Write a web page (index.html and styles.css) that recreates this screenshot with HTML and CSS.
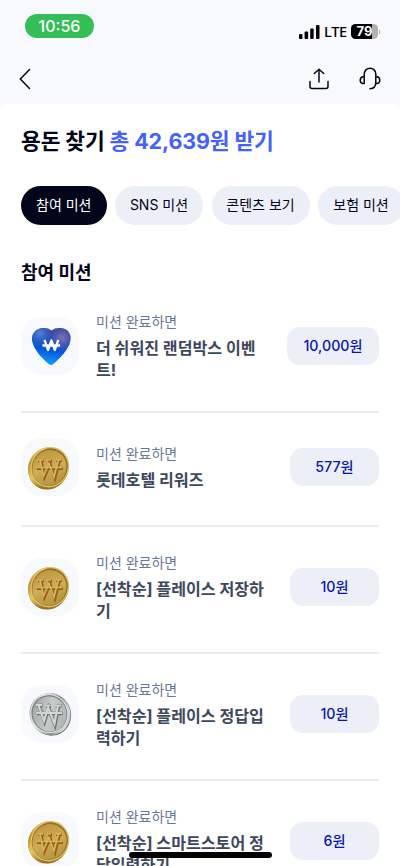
FILE: index.html
```html
<!DOCTYPE html>
<html lang="ko">
<head>
<meta charset="utf-8">
<meta name="viewport" content="width=device-width, initial-scale=1">
<title>용돈 찾기</title>
<link rel="stylesheet" href="styles.css">
</head>
<body>
<svg class="defs" width="0" height="0">
  <defs>
    <linearGradient id="goldRim" x1="0" y1="0" x2="1" y2="1"><stop offset="0" stop-color="#fff09a"/><stop offset=".3" stop-color="#b88d30"/><stop offset=".55" stop-color="#e9c75a"/><stop offset=".8" stop-color="#8d6a1e"/><stop offset="1" stop-color="#d8b344"/></linearGradient>
    <linearGradient id="goldFace" x1="0" y1="0" x2="1" y2="1"><stop offset="0" stop-color="#b8923c"/><stop offset=".5" stop-color="#ceab54"/><stop offset="1" stop-color="#a98a3c"/></linearGradient>
    <linearGradient id="silverRim" x1="0" y1="0" x2="1" y2="1"><stop offset="0" stop-color="#777e7c"/><stop offset=".3" stop-color="#eef0ef"/><stop offset=".6" stop-color="#8d9593"/><stop offset=".8" stop-color="#d8dddb"/><stop offset="1" stop-color="#626b68"/></linearGradient>
    <linearGradient id="silverFace" x1="0" y1="0" x2="1" y2="1"><stop offset="0" stop-color="#979e9c"/><stop offset=".5" stop-color="#c5cbc9"/><stop offset="1" stop-color="#a4aca9"/></linearGradient>
    <linearGradient id="heartFill" x1=".6" y1="0" x2=".4" y2="1"><stop offset="0" stop-color="#41489a"/><stop offset=".3" stop-color="#2850b8"/><stop offset=".6" stop-color="#0757d8"/><stop offset="1" stop-color="#10a0ff"/></linearGradient>
    <radialGradient id="heartGlow" cx=".78" cy=".27" r=".35"><stop offset="0" stop-color="#9b7cb0" stop-opacity=".8"/><stop offset="1" stop-color="#5b5bb0" stop-opacity="0"/></radialGradient>
    <radialGradient id="heartShine" cx=".2" cy=".15" r=".35"><stop offset="0" stop-color="#5f93e4" stop-opacity=".8"/><stop offset="1" stop-color="#2860c8" stop-opacity="0"/></radialGradient>
    <path id="heartShape" d="M30.500 13.500C27 10.500 21 10.300 16.500 12.500C11.500 15 10 20.500 11.500 25.500C14 34 21 41.500 28 47.200Q30 48.800 32 47.200C40 40.500 46.500 33.500 49 25.500C50.500 20.500 49.500 15 45 12.500C40 10.300 34 10.500 30.500 13.500Z"/>
    <symbol id="gold" viewBox="0 0 58 58">
      <ellipse cx="27" cy="30.800" rx="19.500" ry="21.100" transform="rotate(25 27 30.800)" fill="#a07a26"/>
      <ellipse cx="27.300" cy="30.300" rx="20" ry="21.300" transform="rotate(25 27.300 30.300)" fill="url(#goldRim)"/>
      <ellipse cx="28.800" cy="29.200" rx="19.200" ry="20.500" transform="rotate(25 28.800 29.200)" fill="#e0c162"/>
      <ellipse cx="28.800" cy="29.200" rx="17.800" ry="19.100" transform="rotate(25 28.800 29.200)" fill="#94701f"/>
      <ellipse cx="28.400" cy="29.800" rx="16.800" ry="18.100" transform="rotate(25 28.400 29.800)" fill="url(#goldFace)"/>
      <g fill="none" stroke-linejoin="miter">
        <path d="M17 22.500h6M20 22.500l3.500 16.500L29 26l5 14 4.500-17.500M27 23h4M35 22.500h6M16 30.500h26" stroke="#955f1c" stroke-width="3"/>
        <path d="M16.500 21.800h6M19 22l3.500 16L28 25.500l5 13.500 4.500-17M26 22h4M34.500 21.800h6M15.500 29.500h26" stroke="#d6b45c" stroke-width="1.700"/>
      </g>
    </symbol>
    <symbol id="silver" viewBox="0 0 58 58">
      <ellipse cx="29.600" cy="29.400" rx="20.300" ry="21.500" transform="rotate(-28 29.600 29.400)" fill="#626b68"/>
      <ellipse cx="29" cy="29" rx="20.300" ry="21.300" transform="rotate(-28 29 29)" fill="url(#silverRim)"/>
      <ellipse cx="28.400" cy="28.600" rx="18.800" ry="19.700" transform="rotate(-28 28.400 28.600)" fill="#dde1df"/>
      <ellipse cx="28.400" cy="28.600" rx="17.800" ry="18.700" transform="rotate(-28 28.400 28.600)" fill="#7b8380"/>
      <ellipse cx="28.700" cy="29" rx="16.800" ry="17.700" transform="rotate(-28 28.700 29)" fill="url(#silverFace)"/>
      <g fill="none" stroke-linejoin="miter">
        <path d="M15.500 20.500h6M18 21l5.500 15.500L27.500 23l6.500 16.500L37.500 21M25 21h5M34.500 21h6M16 28.500h25.500" stroke="#6b7370" stroke-width="3.600"/>
        <path d="M15 20h6M17.500 20.500l5.500 15.500L27 22.500 33.500 38.500 37 20.500M24.500 20.500h5M34 20.500h6M15.500 28h25.500" stroke="#d2d7d5" stroke-width="2.200"/>
      </g>
    </symbol>
    <symbol id="heart" viewBox="0 0 58 58">
      <use href="#heartShape" fill="url(#heartFill)"/>
      <use href="#heartShape" fill="url(#heartGlow)"/>
      <use href="#heartShape" fill="url(#heartShine)"/>
      <path d="M23.500 22.800l3.500 10.200 3.400-9.500 3.400 9.500 3.500-10.200M21.500 28.500h17.500" fill="none" stroke="#fff" stroke-width="2.300" stroke-linejoin="round"/>
    </symbol>
  </defs>
</svg>

<div class="screen">
  <div class="status">
    <span class="clock">10:56</span>
    <div class="status-right">
      <svg width="21" height="14" viewBox="0 0 21 14"><rect x="0" y="9" width="3.500" height="5" rx="1"/><rect x="5.600" y="6.500" width="3.500" height="7.500" rx="1"/><rect x="11.200" y="3.500" width="3.500" height="10.500" rx="1"/><rect x="17" y="0" width="3.500" height="14" rx="1"/></svg>
      <span class="network">LTE</span>
      <span class="battery">79</span>
      <i class="battery-tip"></i>
    </div>
  </div>

  <header class="nav">
    <svg class="back" width="12" height="22" viewBox="0 0 12 22"><path d="M10.500 1.600L1.300 11l9.200 9.400"/></svg>
    <div class="actions">
      <svg width="20" height="22" viewBox="0 0 20 22"><path d="M10 14V1.200M5.300 5.500L10 1.200l4.700 4.300M1 13.500V18.500a2 2 0 0 0 2 2h14a2 2 0 0 0 2-2v-5"/></svg>
      <svg width="24" height="23" viewBox="0 0 24 23"><path d="M6.200 16.500V7a5.800 5.800 0 0 1 11.600 0v8.500c0 3.500-1.800 6-5.800 6.200M6.200 9.800H4.700a3.500 3.500 0 0 0 0 6.700h1.500M17.800 9.800h1.500a3.500 3.500 0 0 1 0 6.700h-1.500"/></svg>
    </div>
  </header>

  <main class="sheet">
    <h1>용돈 찾기 <span>총 42,639원 받기</span></h1>
    <nav class="chips">
      <span class="chip active">참여 미션</span>
      <span class="chip sns">SNS 미션</span>
      <span class="chip contents">콘텐츠 보기</span>
      <span class="chip">보험 미션</span>
    </nav>
    <h2>참여 미션</h2>
    <ul class="missions">
      <li>
        <svg class="thumb"><use href="#heart"/></svg>
        <div class="info"><p>미션 완료하면</p><h3>더 쉬워진 랜덤박스 이벤<br>트!</h3></div>
        <span class="reward wide">10,000원</span>
      </li>
      <li>
        <svg class="thumb"><use href="#gold"/></svg>
        <div class="info"><p>미션 완료하면</p><h3>롯데호텔 리워즈</h3></div>
        <span class="reward">577원</span>
      </li>
      <li>
        <svg class="thumb"><use href="#gold"/></svg>
        <div class="info"><p>미션 완료하면</p><h3>[선착순] 플레이스 저장하<br>기</h3></div>
        <span class="reward">10원</span>
      </li>
      <li>
        <svg class="thumb"><use href="#silver"/></svg>
        <div class="info"><p>미션 완료하면</p><h3>[선착순] 플레이스 정답입<br>력하기</h3></div>
        <span class="reward">10원</span>
      </li>
      <li>
        <svg class="thumb"><use href="#gold"/></svg>
        <div class="info"><p>미션 완료하면</p><h3>[선착순] 스마트스토어 정<br>답입력하기</h3></div>
        <span class="reward">6원</span>
      </li>
    </ul>
  </main>
  <div class="home-bar"></div>
</div>
</body>
</html>
```
FILE: styles.css
```css
* { box-sizing: border-box; margin: 0; padding: 0; }
html, body { height: 866px; overflow: hidden; }
body { font-family: Inter, "Noto Sans CJK KR", sans-serif; background: #f8f9fd; color: #03051a; }
.defs { position: absolute; }
.screen { position: relative; height: 866px; overflow: hidden; display: flex; flex-direction: column; }

.status { height: 52px; flex: none; display: flex; justify-content: space-between; padding: 14px 20px 0 25px; }
.clock { width: 69px; height: 24px; border-radius: 12px; background: #33be57; color: #fff; font-size: 16px; font-weight: 500; line-height: 24px; text-align: center; }
.status-right { display: flex; align-items: center; height: 15px; margin-top: 10px; }
.network { font: 500 14.5px/15px "Noto Sans", sans-serif; color: #000; margin-left: 4px; width: 23px; letter-spacing: -.3px; }
.battery { width: 27px; height: 15px; border-radius: 4.5px; margin-left: 4px; background: linear-gradient(90deg, #000 79%, #b1b1b4 79%); color: #fff; font-size: 13px; font-weight: 700; line-height: 15px; text-align: center; }
.battery-tip { width: 1px; height: 4px; background: #b1b1b4; margin-left: 1px; }

.nav { height: 52px; flex: none; display: flex; justify-content: space-between; align-items: center; padding: 1px 18px 0 19px; }
.nav svg { fill: none; stroke: #03051a; stroke-width: 1.5; stroke-linecap: round; stroke-linejoin: round; }
.actions { display: flex; gap: 29px; align-items: center; }

.sheet { flex: 1; min-height: 0; background: #fff; border-radius: 5px 5px 0 0; padding: 21px 0 0 21px; }
h1 { font-size: 21.5px; line-height: 32px; font-weight: 700; white-space: nowrap; letter-spacing: -.13px; }
h1 span { color: #4262fb; }
.chips { display: flex; gap: 8.5px; margin-top: 29px; overflow: hidden; }
.chip { flex: none; width: 86px; height: 39px; border-radius: 20px; background: #eceff7; font-size: 14px; line-height: 38px; text-align: center; white-space: nowrap; }
.chip.active { background: #03051a; color: #fff; width: 85.5px; }
.chip.sns { width: 88px; }
.chip.contents { width: 98px; }
h2 { font-size: 18px; line-height: 28px; font-weight: 700; margin-top: 34px; }

.missions { list-style: none; margin: -1px 21px 0 0; }
.missions li { display: flex; align-items: center; height: 127px; padding: 24px 0 29px; border-bottom: 2px solid #e9ecf5; }
.missions li:nth-child(2) { height: 114px; }
.thumb { flex: none; width: 58px; height: 58px; border-radius: 21px; background: #f8f9fd; }
.info { flex: 1; margin-left: 17px; white-space: nowrap; }
.info p { font-size: 14px; line-height: 22px; color: #69789a; }
.info h3 { font-size: 16.1px; line-height: 22px; font-weight: 700; color: #3d485c; margin-top: 4px; }
.reward { flex: none; width: 89px; height: 38px; border-radius: 13px; background: #eceff7; color: #0716ae; font-size: 14.2px; font-weight: 500; line-height: 38px; text-align: center; }
.reward.wide { width: 92px; }
.home-bar { position: absolute; left: 129px; top: 852px; width: 143px; height: 6px; border-radius: 3px; background: #000; }
```
